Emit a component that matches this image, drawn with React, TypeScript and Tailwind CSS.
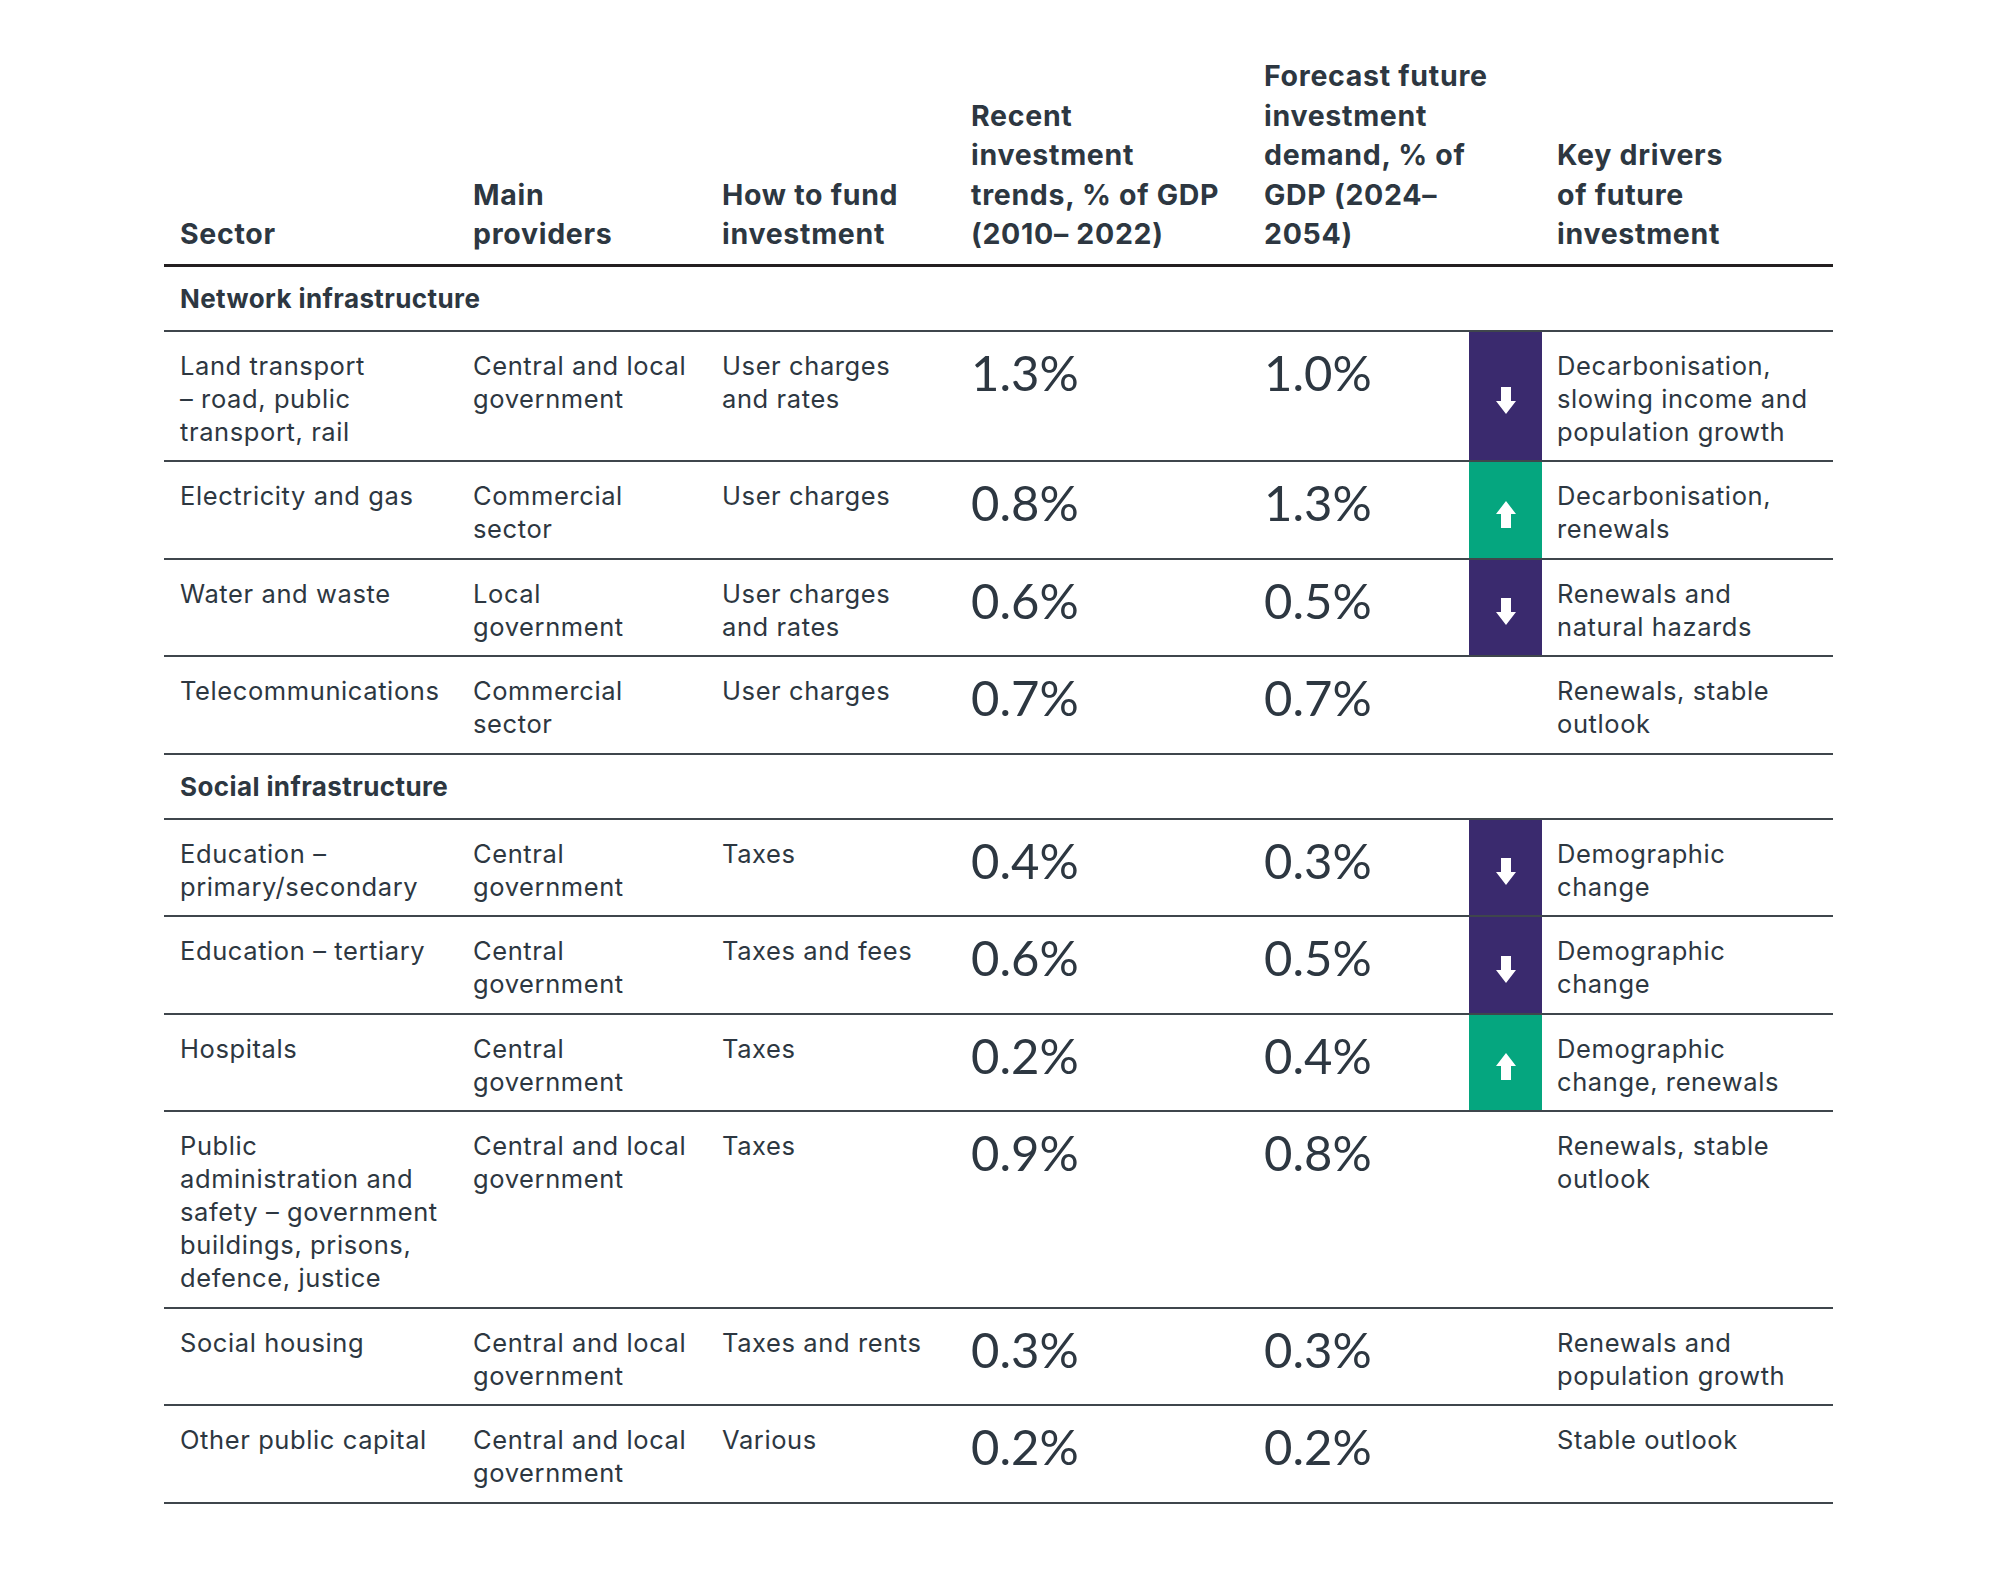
import React from "react";

type Row =
  | { section: string }
  | {
      sector: string[];
      prov: string[];
      fund: string[];
      recent: string;
      forecast: string;
      arrow?: "up" | "down";
      drivers: string[];
    };

const rows: Row[] = [
  { section: "Network infrastructure" },
  {
    sector: ["Land transport", "– road, public", "transport, rail"],
    prov: ["Central and local", "government"],
    fund: ["User charges", "and rates"],
    recent: "1.3%",
    forecast: "1.0%",
    arrow: "down",
    drivers: ["Decarbonisation,", "slowing income and", "population growth"],
  },
  {
    sector: ["Electricity and gas"],
    prov: ["Commercial", "sector"],
    fund: ["User charges"],
    recent: "0.8%",
    forecast: "1.3%",
    arrow: "up",
    drivers: ["Decarbonisation,", "renewals"],
  },
  {
    sector: ["Water and waste"],
    prov: ["Local", "government"],
    fund: ["User charges", "and rates"],
    recent: "0.6%",
    forecast: "0.5%",
    arrow: "down",
    drivers: ["Renewals and", "natural hazards"],
  },
  {
    sector: ["Telecommunications"],
    prov: ["Commercial", "sector"],
    fund: ["User charges"],
    recent: "0.7%",
    forecast: "0.7%",
    drivers: ["Renewals, stable", "outlook"],
  },
  { section: "Social infrastructure" },
  {
    sector: ["Education –", "primary/secondary"],
    prov: ["Central", "government"],
    fund: ["Taxes"],
    recent: "0.4%",
    forecast: "0.3%",
    arrow: "down",
    drivers: ["Demographic", "change"],
  },
  {
    sector: ["Education – tertiary"],
    prov: ["Central", "government"],
    fund: ["Taxes and fees"],
    recent: "0.6%",
    forecast: "0.5%",
    arrow: "down",
    drivers: ["Demographic", "change"],
  },
  {
    sector: ["Hospitals"],
    prov: ["Central", "government"],
    fund: ["Taxes"],
    recent: "0.2%",
    forecast: "0.4%",
    arrow: "up",
    drivers: ["Demographic", "change, renewals"],
  },
  {
    sector: [
      "Public",
      "administration and",
      "safety – government",
      "buildings, prisons,",
      "defence, justice",
    ],
    prov: ["Central and local", "government"],
    fund: ["Taxes"],
    recent: "0.9%",
    forecast: "0.8%",
    drivers: ["Renewals, stable", "outlook"],
  },
  {
    sector: ["Social housing"],
    prov: ["Central and local", "government"],
    fund: ["Taxes and rents"],
    recent: "0.3%",
    forecast: "0.3%",
    drivers: ["Renewals and", "population growth"],
  },
  {
    sector: ["Other public capital"],
    prov: ["Central and local", "government"],
    fund: ["Various"],
    recent: "0.2%",
    forecast: "0.2%",
    drivers: ["Stable outlook"],
  },
];

const header: string[][] = [
  ["Sector"],
  ["Main", "providers"],
  ["How to fund", "investment"],
  ["Recent", "investment", "trends, % of GDP", "(2010– 2022)"],
  ["Forecast future", "investment", "demand, % of", "GDP (2024–", "2054)"],
  [],
  ["Key drivers", "of future", "investment"],
];

const GRID =
  "grid grid-cols-[293px_249px_249px_293px_221px_73px_291px]";

function Lines({ lines }: { lines: string[] }) {
  return (
    <>
      {lines.map((l, i) => (
        <div key={i} className="whitespace-nowrap">
          {l}
        </div>
      ))}
    </>
  );
}

function Arrow({ dir }: { dir: "up" | "down" }) {
  return (
    <svg width="20" height="27" viewBox="0 0 20 27" fill="white" className="mt-[9px]">
      {dir === "down" ? (
        <path d="M5 0 H15 V14 H20 L10 27 L0 14 H5 Z" />
      ) : (
        <path d="M10 0 L20 13 H15 V27 H5 V13 H0 Z" />
      )}
    </svg>
  );
}

const numFont = { fontFamily: "Lato, 'Liberation Sans', sans-serif" };

export default function App() {
  return (
    <div
      className="min-h-[1590px] w-[2000px] bg-white text-[#2d3741]"
      style={{ fontFamily: "Inter, 'Liberation Sans', sans-serif" }}
    >
      <div className="ml-[164px] w-[1669px] pt-[56px]">
        {/* Header */}
        <div className={`${GRID} items-end border-b-[3px] border-[#231f20]`}>
          {header.map((h, i) => (
            <div
              key={i}
              className={`pb-[10px] text-[28.5px] font-bold leading-[39.5px] tracking-[0.7px] ${
                i === 6 ? "pl-[15px]" : "pl-4"
              }`}
            >
              <Lines lines={h} />
            </div>
          ))}
        </div>

        {rows.map((r, idx) => {
          if ("section" in r) {
            return (
              <div
                key={idx}
                className="flex h-[65px] items-center border-b-2 border-[#3f464c] pl-4 text-[26px] font-bold tracking-[0.4px]"
              >
                {r.section}
              </div>
            );
          }
          const cellCls =
            "pt-[17px] pb-[12.5px] pl-4 text-[25.5px] leading-[33px] tracking-[0.6px]";
          return (
            <div key={idx} className={`${GRID} border-b-2 border-[#3f464c]`}>
              <div className={cellCls}>
                <Lines lines={r.sector} />
              </div>
              <div className={cellCls}>
                <Lines lines={r.prov} />
              </div>
              <div className={cellCls}>
                <Lines lines={r.fund} />
              </div>
              <div
                className="pl-4 pt-[15px] text-[49px] font-normal leading-[50px]"
                style={numFont}
              >
                {r.recent}
              </div>
              <div
                className="pl-4 pt-[15px] text-[49px] font-normal leading-[50px]"
                style={numFont}
              >
                {r.forecast}
              </div>
              {r.arrow ? (
                <div
                  className={`flex items-center justify-center ${
                    r.arrow === "down" ? "bg-[#3a2a6e]" : "bg-[#05a67f]"
                  }`}
                >
                  <Arrow dir={r.arrow} />
                </div>
              ) : (
                <div />
              )}
              <div
                className={
                  "pt-[17px] pb-[12.5px] pl-[15px] text-[25.5px] leading-[33px] tracking-[0.6px]"
                }
              >
                <Lines lines={r.drivers} />
              </div>
            </div>
          );
        })}
      </div>
    </div>
  );
}
